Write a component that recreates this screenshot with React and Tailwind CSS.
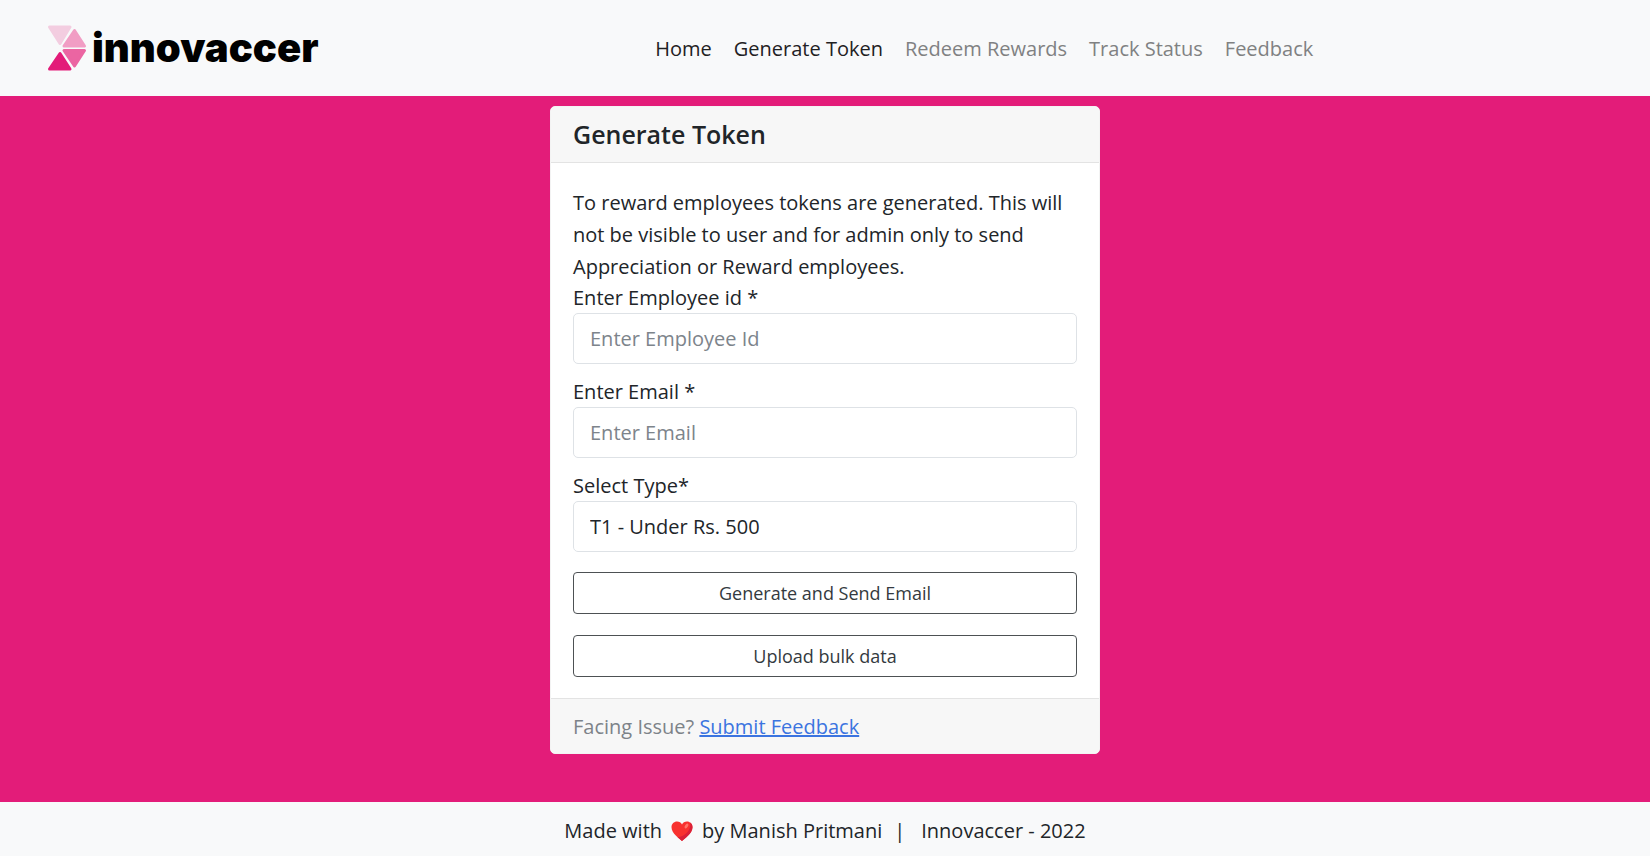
const navLinks = [
  { label: "Home", active: true },
  { label: "Generate Token", active: true },
  { label: "Redeem Rewards", active: false },
  { label: "Track Status", active: false },
  { label: "Feedback", active: false },
];

const labelClass = "block leading-[30px]";

const fieldClass =
  "block h-[51px] w-full appearance-none rounded-[5px] border border-[#dee2e6] bg-white px-4 text-[20px] text-[#212529] placeholder:text-[#7d848b]";

const buttonClass =
  "block h-[42px] w-full rounded-[4px] border border-[#4d5154] bg-white text-[18px] text-[#343a40]";

function Logo() {
  return (
    <a href="#home" aria-label="innovaccer" className="flex items-center gap-1">
      <svg width="42" height="48" viewBox="0 0 42 48" strokeLinejoin="round" strokeWidth="3" aria-hidden="true">
        <path d="M3.5 3H24L14 19.5Z" fill="#f3cde0" stroke="#f3cde0" />
        <path d="M28.500 6.5L38.500 22H18Z" fill="#f19dc4" stroke="#f19dc4" />
        <path d="M18 26.500H38.500L28.500 42Z" fill="#eb65a2" stroke="#eb65a2" />
        <path d="M14 29.5L24 45H3.5Z" fill="#e31c79" stroke="#e31c79" />
      </svg>
      <span className="font-['Inter',sans-serif] text-[40px] leading-[48px] font-black text-black">innovaccer</span>
    </a>
  );
}

function Heart() {
  return (
    <svg width="22" height="22" viewBox="0 0 22 22" role="img" aria-label="love" className="mx-[9px]">
      <path
        d="M11 21C8.500 18.500 .5 13.500 .5 7.300C.5 3.700 3 1.500 6 1.500C8.300 1.500 10.200 2.700 11 4.500C11.800 2.700 13.700 1.500 16 1.500C19 1.500 21.500 3.700 21.500 7.300C21.500 13.500 13.500 18.500 11 21Z"
        fill="#f8312f"
      />
      <path
        d="M19.300 2.500C20.700 3.500 21.500 5.200 21.500 7.300C21.500 13.500 13.500 18.500 11 21C10 20 8.300 18.700 6.600 17.200C14 16.500 20.500 10 19.300 2.500Z"
        fill="#d92038"
      />
      <ellipse cx="15.500" cy="6" rx="1.500" ry="2.600" transform="rotate(35 15.500 6)" fill="#ff7468" />
    </svg>
  );
}

export default function App() {
  return (
    <div className="flex min-h-screen flex-col bg-[#e31c79] font-['Open_Sans','Noto_Sans',sans-serif] text-[20px] leading-8 text-[#212529]">
      <header className="flex h-24 items-center bg-[#f8f9fa] pl-[46px]">
        <Logo />
        <nav className="flex flex-1 justify-center gap-[22px] pt-0.5">
          {navLinks.map((link) => (
            <a
              key={link.label}
              href={"#" + link.label.toLowerCase().replace(" ", "-")}
              className={link.active ? "text-[#1f2123]" : "text-[#808182]"}
            >
              {link.label}
            </a>
          ))}
        </nav>
      </header>

      <main className="flex-1 pt-[10px] pb-10">
        <section className="mx-auto w-1/3 min-w-[400px] overflow-hidden rounded-[5px] border border-[#f3f3f3] bg-white">
          <h1 className="border-b border-[#e3e3e3] bg-[#f7f7f7] px-[22px] py-3 text-[25px] leading-[31px] font-semibold">
            Generate Token
          </h1>
          <form className="px-[22px] pt-6 pb-[21px]" onSubmit={(event) => event.preventDefault()}>
            <p>
              To reward employees tokens are generated. This will not be visible to user and for admin only to send
              Appreciation or Reward employees.
            </p>
            <div className="flex flex-col gap-[13px]">
              <div>
                <label htmlFor="employee" className={labelClass}>
                  Enter Employee id *
                </label>
                <input id="employee" type="text" placeholder="Enter Employee Id" className={fieldClass} />
              </div>
              <div>
                <label htmlFor="email" className={labelClass}>
                  Enter Email *
                </label>
                <input id="email" type="email" placeholder="Enter Email" className={fieldClass} />
              </div>
              <div>
                <label htmlFor="type" className={labelClass}>
                  Select Type*
                </label>
                <select id="type" className={fieldClass}>
                  <option>T1 - Under Rs. 500</option>
                </select>
              </div>
            </div>
            <div className="mt-5 flex flex-col gap-[21px]">
              <button type="submit" className={buttonClass}>
                Generate and Send Email
              </button>
              <button type="button" className={buttonClass}>
                Upload bulk data
              </button>
            </div>
          </form>
          <div className="border-t border-[#e3e3e3] bg-[#f7f7f7] px-[22px] pt-[13px] pb-[11px] leading-[30px] text-[#7d8389]">
            Facing Issue?{" "}
            <a href="#feedback" className="text-[#3b74e0] underline">
              Submit Feedback
            </a>
          </div>
        </section>
      </main>

      <footer className="flex h-[54px] items-center justify-center bg-[#f8f9fa] pt-[3px]">
        <span>Made with</span>
        <Heart />
        <span>by Manish Pritmani</span>
        <span className="mx-3">|</span>
        <span className="ml-1">Innovaccer - 2022</span>
      </footer>
    </div>
  );
}
